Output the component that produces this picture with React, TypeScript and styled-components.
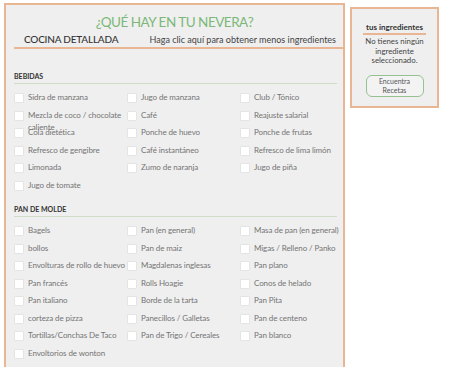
import { FC, ReactElement } from 'react';
import styled, { createGlobalStyle } from 'styled-components';

const GlobalStyle = createGlobalStyle`
    html, body {
        margin: 0;
        padding: 0;
        background: #ffffff;
    }
    body {
        font-family: Lato, 'Open Sans', sans-serif;
    }
`;

const peach = '#e8b692';

interface Section {
    title: string;
    items: string[];
}

// line breaks are kept as in the original page (the long label wraps there)
const sections: Section[] = [
    {
        title: 'BEBIDAS',
        items: [
            'Sidra de manzana', 'Jugo de manzana', 'Club / Tónico',
            'Mezcla de coco / chocolate\ncaliente', 'Café', 'Reajuste salarial',
            'Cola dietética', 'Ponche de huevo', 'Ponche de frutas',
            'Refresco de gengibre', 'Café instantáneo', 'Refresco de lima limón',
            'Limonada', 'Zumo de naranja', 'Jugo de piña',
            'Jugo de tomate',
        ],
    },
    {
        title: 'PAN DE MOLDE',
        items: [
            'Bagels', 'Pan (en general)', 'Masa de pan (en general)',
            'bollos', 'Pan de maiz', 'Migas / Relleno / Panko',
            'Envolturas de rollo de huevo', 'Magdalenas inglesas', 'Pan plano',
            'Pan francés', 'Rolls Hoagie', 'Conos de helado',
            'Pan italiano', 'Borde de la tarta', 'Pan Pita',
            'corteza de pizza', 'Panecillos / Galletas', 'Pan de centeno',
            'Tortillas/Conchas De Taco', 'Pan de Trigo / Cereales', 'Pan blanco',
            'Envoltorios de wonton',
        ],
    },
];

const Page = styled('div')((): any => ({
    display: 'flex',
    alignItems: 'flex-start',
    gap: '5px',
    padding: '3px 0 0 4px',
    height: '367px',
    overflow: 'hidden',
    boxSizing: 'border-box',
}));

const MainPanel = styled('div')((): any => ({
    width: '341px',
    minHeight: '380px',
    boxSizing: 'border-box',
    border: `2px solid ${peach}`,
    borderBottom: 'none',
    background: '#efefef',
}));

const Title = styled('h1')((): any => ({
    margin: 0,
    padding: '7px 0 0 0',
    textAlign: 'center',
    fontSize: '13.5px',
    lineHeight: '20px',
    fontWeight: 400,
    letterSpacing: '-0.5px',
    color: '#7bb878',
}));

const HeaderRow = styled('div')((): any => ({
    display: 'flex',
    justifyContent: 'space-between',
    alignItems: 'center',
    height: '14px',
    margin: '0 0 0 8px',
    padding: '0 7px 1px 10px',
    borderBottom: `2px solid ${peach}`,
}));

const ModeLabel = styled('span')((): any => ({
    fontSize: '10px',
    fontWeight: 500,
    letterSpacing: '-0.2px',
    color: '#333333',
}));

const ToggleLink = styled('a')((): any => ({
    fontSize: '9px',
    color: '#444444',
    cursor: 'pointer',
}));

const Content = styled('div')((): any => ({
    padding: '22px 6px 0 8px',
}));

const Group = styled('section')((): any => ({
    marginBottom: '9px',
}));

const GroupTitle = styled('h2')((): any => ({
    margin: 0,
    paddingBottom: '2px',
    fontSize: '7px',
    lineHeight: '10px',
    fontWeight: 700,
    color: '#333333',
    borderBottom: '1px solid #cfdcc8',
}));

const Grid = styled('div')((): any => ({
    display: 'grid',
    gridTemplateColumns: '113px 113px 1fr',
    marginTop: '6px',
}));

const Item = styled('label')((): any => ({
    display: 'flex',
    alignItems: 'flex-start',
    gap: '4px',
    height: '17.5px',
    paddingTop: '3px',
    boxSizing: 'border-box',
}));

const Box = styled('span')((): any => ({
    flex: '0 0 auto',
    width: '8px',
    height: '8px',
    background: '#ffffff',
    border: '1px solid #e4e4e4',
    borderRadius: '1px',
}));

const ItemText = styled('span')((): any => ({
    fontSize: '8px',
    lineHeight: '12px',
    letterSpacing: '-0.1px',
    whiteSpace: 'pre',
    color: '#747474',
    marginTop: '-2px',
}));

const SidePanel = styled('aside')((): any => ({
    marginTop: '4px',
    width: '89px',
    boxSizing: 'border-box',
    border: `2px solid ${peach}`,
    background: '#efefef',
    padding: '13px 0 9px 0',
    display: 'flex',
    flexDirection: 'column',
    alignItems: 'center',
}));

const SideTitle = styled('div')((): any => ({
    fontSize: '8px',
    lineHeight: '10px',
    fontWeight: 700,
    color: '#333333',
    padding: '0 3px 1px 3px',
    borderBottom: `2px solid ${peach}`,
}));

const SideText = styled('p')((): any => ({
    margin: '2px 0 0 0',
    width: '66px',
    textAlign: 'center',
    fontSize: '7.8px',
    lineHeight: '9.5px',
    color: '#444444',
}));

const FindButton = styled('button')((): any => ({
    marginTop: '9px',
    width: '58px',
    height: '22px',
    padding: 0,
    border: '1px solid #95c290',
    borderRadius: '6px',
    background: '#f3f3f3',
    fontFamily: 'Lato, sans-serif',
    fontSize: '7px',
    lineHeight: '8.5px',
    color: '#555555',
    cursor: 'pointer',
}));

export default function App(): ReactElement {
    return (
        <>
            <GlobalStyle />
            <Page>
                <MainPanel>
                    <Title>¿QUÉ HAY EN TU NEVERA?</Title>
                    <HeaderRow>
                        <ModeLabel>COCINA DETALLADA</ModeLabel>
                        <ToggleLink>Haga clic aquí para obtener menos ingredientes</ToggleLink>
                    </HeaderRow>
                    <Content>
                        {sections.map((s) => (
                            <IngredientGroup key={s.title} section={s} />
                        ))}
                    </Content>
                </MainPanel>
                <SidePanel>
                    <SideTitle>tus ingredientes</SideTitle>
                    <SideText>No tienes ningún ingrediente seleccionado.</SideText>
                    <FindButton>
                        Encuentra
                        <br />
                        Recetas
                    </FindButton>
                </SidePanel>
            </Page>
        </>
    );
}

const IngredientGroup: FC<{ section: Section }> = ({ section }): ReactElement => (
    <Group>
        <GroupTitle>{section.title}</GroupTitle>
        <Grid>
            {section.items.map((item) => (
                <Item key={item}>
                    <Box />
                    <ItemText>{item}</ItemText>
                </Item>
            ))}
        </Grid>
    </Group>
);
